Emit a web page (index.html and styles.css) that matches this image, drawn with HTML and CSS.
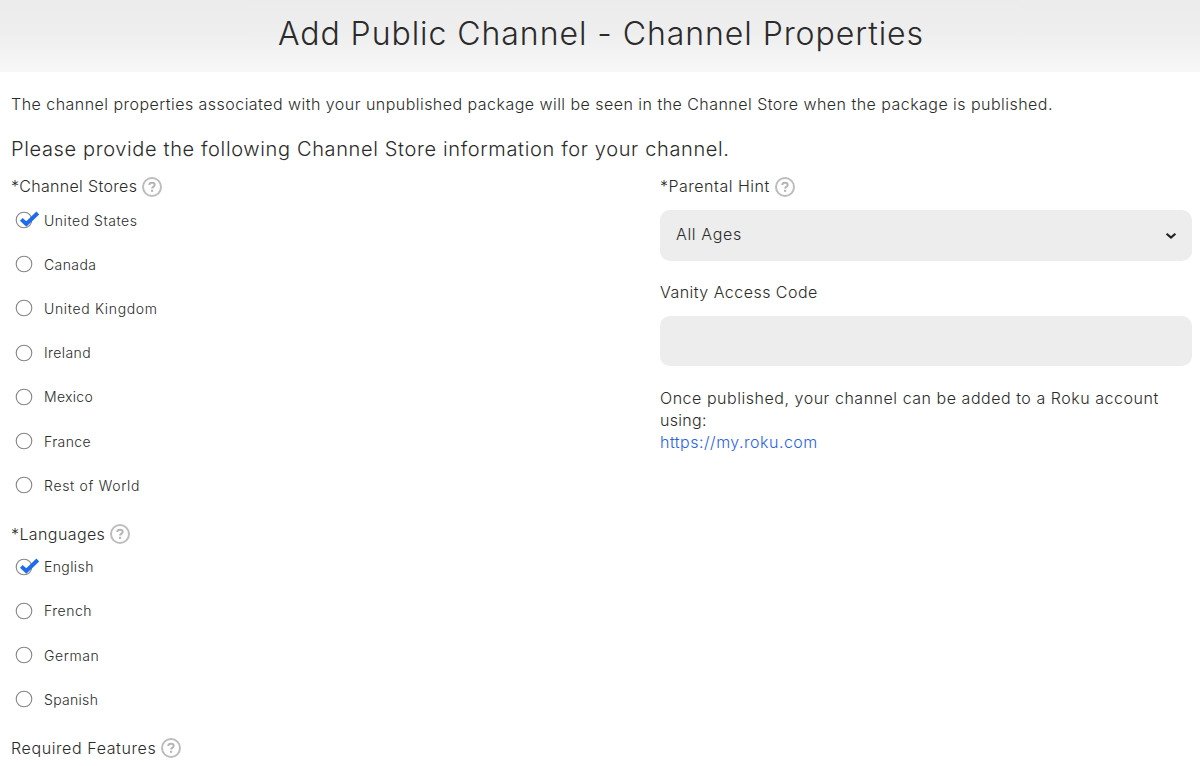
FILE: index.html
```html
<!DOCTYPE html>
<html lang="en">
<head>
<meta charset="utf-8">
<title>Add Public Channel - Channel Properties</title>
<link rel="stylesheet" href="styles.css">
</head>
<body>
<svg class="defs" width="0" height="0" aria-hidden="true">
  <symbol id="help" viewBox="0 0 20 20">
    <circle cx="10" cy="10" r="9" fill="none" stroke="#bdbdbd" stroke-width="2"/>
    <path d="M7.300 8.100C7.300 6.500 8.500 5.700 10 5.700s2.700.8 2.700 2.200c0 1.700-2.600 1.800-2.600 3.700" fill="none" stroke="#b5b5b5" stroke-width="2"/>
    <rect x="9" y="12.800" width="2.200" height="2" fill="#b5b5b5"/>
  </symbol>
  <symbol id="off" viewBox="0 0 26 20">
    <circle cx="9" cy="10" r="7.800" fill="#fff" stroke="#858585" stroke-width="1.100"/>
  </symbol>
  <symbol id="on" viewBox="0 0 26 20">
    <circle cx="9" cy="10" r="7.800" fill="#fff" stroke="#858585" stroke-width="1.100"/>
    <path d="M6.300 9.300l5 4.700L22.800 3" fill="none" stroke="#1f6bf0" stroke-width="3.900"/>
  </symbol>
</svg>
<header class="banner"><h1 class="title">Add Public Channel - Channel Properties</h1></header>
<main class="page">
  <p class="intro">The channel properties associated with your unpublished package will be seen in the Channel Store when the package is published.</p>
  <h2 class="lead">Please provide the following Channel Store information for your channel.</h2>
  <div class="columns">
    <section class="left">
      <div class="label"><span class="stores">*Channel Stores</span><svg class="help"><use href="#help"/></svg></div>
      <ul class="options">
        <li><svg class="box"><use href="#on"/></svg><span class="us">United States</span></li>
        <li><svg class="box"><use href="#off"/></svg><span class="canada">Canada</span></li>
        <li><svg class="box"><use href="#off"/></svg><span class="uk">United Kingdom</span></li>
        <li><svg class="box"><use href="#off"/></svg><span class="ireland">Ireland</span></li>
        <li><svg class="box"><use href="#off"/></svg><span class="mexico">Mexico</span></li>
        <li><svg class="box"><use href="#off"/></svg><span class="france">France</span></li>
        <li><svg class="box"><use href="#off"/></svg><span class="world">Rest of World</span></li>
      </ul>
      <div class="label next"><span class="languages">*Languages</span><svg class="help"><use href="#help"/></svg></div>
      <ul class="options">
        <li><svg class="box"><use href="#on"/></svg><span class="english">English</span></li>
        <li><svg class="box"><use href="#off"/></svg><span class="french">French</span></li>
        <li><svg class="box"><use href="#off"/></svg><span class="german">German</span></li>
        <li><svg class="box"><use href="#off"/></svg><span class="spanish">Spanish</span></li>
      </ul>
      <div class="label next"><span class="required">Required Features</span><svg class="help"><use href="#help"/></svg></div>
    </section>
    <section class="right">
      <div class="label"><span class="hint">*Parental Hint</span><svg class="help"><use href="#help"/></svg></div>
      <div class="field"><span class="ages">All Ages</span><svg class="chevron" viewBox="0 0 12 8"><path d="M1.600 1.700L6 5.600l4.400-3.900" fill="none" stroke="#222" stroke-width="2.200"/></svg></div>
      <div class="label vanity"><span class="code">Vanity Access Code</span></div>
      <div class="field input"></div>
      <p class="note"><span class="once">Once published, your channel can be added to a Roku account</span><br>using:<br><a class="link" href="#">https://my.roku.com</a></p>
    </section>
  </div>
</main>
</body>
</html>
```
FILE: styles.css
```css
* { box-sizing: border-box; }
body { margin: 0; height: 766px; overflow: hidden; background: #fff; color: #2b2b2b; font: 300 16px/22px Inter, "Open Sans", sans-serif; }
.defs { display: block; position: absolute; }
.banner { height: 72px; background: linear-gradient(#ececec 0%, #eeeeee 45%, #f8f8f8 100%); display: flex; justify-content: center; padding: 13px 0 0 2px; }
.title { margin: 0; font-size: 32px; line-height: 42px; font-weight: 300; letter-spacing: .95px; white-space: nowrap; }
.page { padding: 21px 8px 0 11px; }
.intro { margin: 0; white-space: nowrap; letter-spacing: .465px; }
.lead { margin: 21px 0 0; font-size: 20px; line-height: 26px; font-weight: 300; letter-spacing: .64px; }
.columns { display: grid; grid-template-columns: 649px 532px; margin-top: 13px; }
.label { display: flex; align-items: center; height: 22px; gap: 5px; white-space: nowrap; letter-spacing: .3px; }
.help { width: 20px; height: 20px; margin-top: 1px; }
.options { list-style: none; margin: 1px 0 0; padding: 0 0 0 4px; font-size: 14px; letter-spacing: .4px; }
.options li { display: flex; align-items: center; height: 44.2px; }
.options span { padding-top: 1px; }
.box { width: 26px; height: 20px; margin-right: 3px; }
.next { margin-top: 15.3px; }
.left .next + .options { margin-top: 0; }
.stores { letter-spacing: .33px; }
.languages { letter-spacing: .4px; }
.required { letter-spacing: .6px; }
.hint { letter-spacing: .5px; }
.code { letter-spacing: .47px; }
.ages { letter-spacing: .65px; }
.us { letter-spacing: .53px; }
.uk { letter-spacing: .65px; }
.mexico, .spanish { letter-spacing: .3px; }
.world { letter-spacing: .68px; }
.french { letter-spacing: .5px; }
.german { letter-spacing: .6px; }
.field { display: flex; align-items: center; justify-content: space-between; height: 51px; margin-top: 13px; padding: 0 15px 4px 16px; border-radius: 10px; background: #ededed; }
.chevron { width: 12px; height: 8px; margin-top: 4px; }
.vanity { margin-top: 20px; }
.input { height: 50px; }
.note { margin: 21px 0 0; letter-spacing: .3px; white-space: nowrap; }
.once { letter-spacing: .53px; }
.link { color: #2962e8; text-decoration: none; letter-spacing: .5px; }
```
